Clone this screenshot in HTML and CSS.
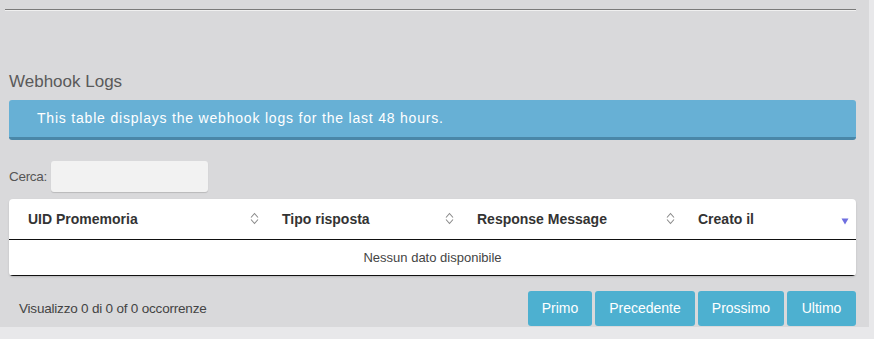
FILE: index.html
```html
<!DOCTYPE html>
<html>
<head>
<meta charset="utf-8">
<link rel="stylesheet" href="styles.css">
</head>
<body>
<div class="panel">
  <div class="rule"></div>
  <h2 class="title">Webhook Logs</h2>
  <div class="alert">This table displays the webhook logs for the last 48 hours.</div>
  <div class="search">
    <label class="search-label">Cerca:</label>
    <input class="search-input" type="text">
  </div>
  <div class="card">
    <table class="grid">
      <thead>
        <tr>
          <th class="c1"><span>UID Promemoria</span><svg class="sort" viewBox="0 0 9 13" width="9" height="13"><path d="M1 5.5 L4.5 1.5 L8 5.5 M1 7.5 L4.5 11.5 L8 7.5" fill="none" stroke="#8a8a8a" stroke-width="1.1"/></svg></th>
          <th class="c2"><span>Tipo risposta</span><svg class="sort" viewBox="0 0 9 13" width="9" height="13"><path d="M1 5.5 L4.5 1.5 L8 5.5 M1 7.5 L4.5 11.5 L8 7.5" fill="none" stroke="#8a8a8a" stroke-width="1.1"/></svg></th>
          <th class="c3"><span>Response Message</span><svg class="sort" viewBox="0 0 9 13" width="9" height="13"><path d="M1 5.5 L4.5 1.5 L8 5.5 M1 7.5 L4.5 11.5 L8 7.5" fill="none" stroke="#8a8a8a" stroke-width="1.1"/></svg></th>
          <th class="c4"><span>Creato il</span><svg class="tri" viewBox="0 0 8 7" width="8" height="7"><path d="M0.5 0.5 L7.5 0.5 L4 6.5 Z" fill="#6f6fe0"/></svg></th>
        </tr>
      </thead>
      <tbody>
        <tr><td colspan="4" class="empty">Nessun dato disponibile</td></tr>
      </tbody>
    </table>
  </div>
  <div class="footer">
    <div class="info">Visualizzo 0 di 0 of 0 occorrenze</div>
    <div class="pager">
      <button class="btn b1">Primo</button>
      <button class="btn b2">Precedente</button>
      <button class="btn b3">Prossimo</button>
      <button class="btn b4">Ultimo</button>
    </div>
  </div>
</div>
</body>
</html>
```

FILE: styles.css
```css
html, body {
  margin: 0;
  padding: 0;
  background: #e8e8ea;
  font-family: "Liberation Sans", Arial, sans-serif;
}
.panel {
  width: 869px;
  height: 327px;
  box-sizing: border-box;
  background: #d9d9db;
  padding: 9px 13px 0 9px;
  display: flex;
  flex-direction: column;
}
.rule {
  margin-left: -4px;
  border-top: 1px solid #7a7a7a;
  border-bottom: 1px solid #f0f0f0;
  height: 0;
}
.title {
  margin: 60px 0 0 0;
  font-size: 17px;
  font-weight: normal;
  color: #5a5a5a;
  line-height: 22px;
  height: 22px;
}
.alert {
  margin-top: 7px;
  height: 37px;
  background: #67b0d5;
  border-bottom: 3px solid #4a87a8;
  border-radius: 3px;
  color: #fff;
  font-size: 14px;
  letter-spacing: 0.8px;
  line-height: 37px;
  padding-left: 28px;
}
.search {
  margin-top: 21px;
  display: flex;
  align-items: center;
  height: 31px;
}
.search-label {
  font-size: 13.5px;
  color: #555;
  letter-spacing: -0.3px;
  margin-right: 4px;
}
.search-input {
  width: 157px;
  height: 31px;
  box-sizing: border-box;
  border: none;
  border-radius: 3px;
  background: #f2f2f2;
  box-shadow: 0 1px 1px rgba(0,0,0,0.15);
  margin: 0;
}
.card {
  margin-top: 7px;
  background: #fff;
  border-radius: 4px;
  box-shadow: 0 1px 2px rgba(0,0,0,0.15);
  overflow: hidden;
}
.grid {
  width: 100%;
  border-collapse: collapse;
  table-layout: fixed;
}
.grid th {
  box-sizing: border-box;
  height: 40px;
  padding: 0 0 0 19px;
  text-align: left;
  font-size: 14px;
  font-weight: bold;
  color: #333;
  border-bottom: 1px solid #111;
  position: relative;
}
.grid th span {
  display: inline-block;
}
.c1 { width: 254px; }
.c2 { width: 195px; }
.c3 { width: 221px; }
.c4 { width: auto; }
.sort {
  position: absolute;
  right: 4px;
  top: 13px;
}
.tri {
  position: absolute;
  right: 7px;
  top: 19px;
}
.empty {
  height: 35px;
  padding: 0;
  text-align: center;
  font-size: 13px;
  color: #444;
  border-bottom: 1px solid #111;
}
.footer {
  margin-top: 15px;
  display: flex;
  justify-content: space-between;
  align-items: center;
}
.info {
  padding-left: 10px;
  font-size: 13.5px;
  color: #444;
  letter-spacing: -0.2px;
}
.pager {
  display: flex;
  gap: 3px;
}
.btn {
  height: 35px;
  border: none;
  border-radius: 3px;
  background: #4db0d0;
  color: #fff;
  font-family: "Liberation Sans", Arial, sans-serif;
  font-size: 14px;
  padding: 0;
}
.b1 { width: 64px; }
.b2 { width: 100px; }
.b3 { width: 86px; }
.b4 { width: 69px; }
```
